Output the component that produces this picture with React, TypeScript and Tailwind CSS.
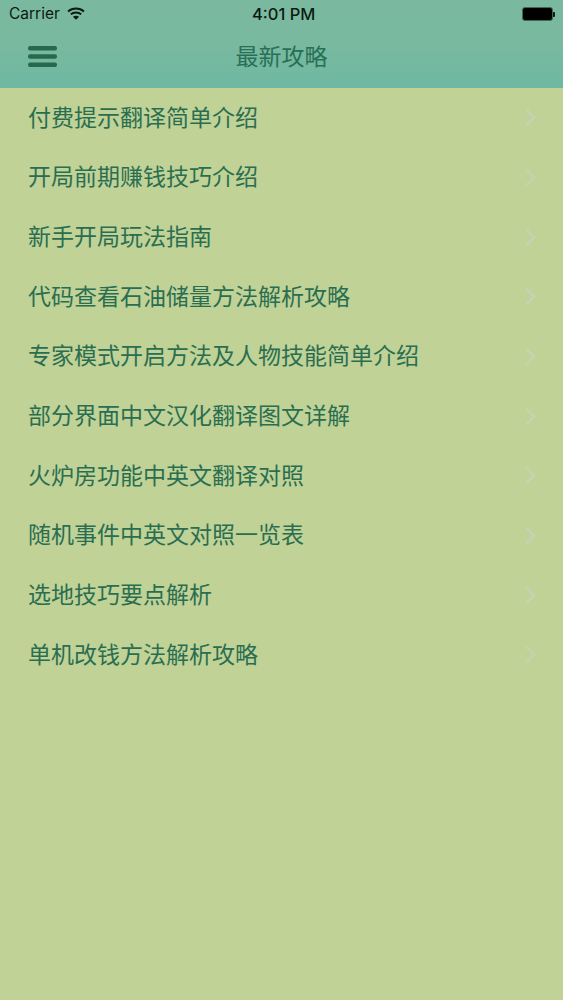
import React from "react";

const items = [
  "付费提示翻译简单介绍",
  "开局前期赚钱技巧介绍",
  "新手开局玩法指南",
  "代码查看石油储量方法解析攻略",
  "专家模式开启方法及人物技能简单介绍",
  "部分界面中文汉化翻译图文详解",
  "火炉房功能中英文翻译对照",
  "随机事件中英文对照一览表",
  "选地技巧要点解析",
  "单机改钱方法解析攻略",
];

export default function App() {
  return (
    <div className="h-[1000px] w-[563px] overflow-hidden bg-[#c0d296] font-['Noto_Sans_CJK_SC','Liberation_Sans',sans-serif]">
      <header className="h-[88px] bg-gradient-to-b from-[#7ab99f] via-[#79b99f] to-[#6fb8a3]">
        <div className="relative flex h-[28px] items-center justify-between pl-[9px] pr-[8px] font-['Inter','Liberation_Sans',sans-serif] text-[#0b1a12]">
          <div className="flex items-center gap-[7px]">
            <span className="text-[15.5px] leading-none">Carrier</span>
            <svg width="18" height="13" viewBox="0 0 17 12" className="mt-[-2px]" fill="none" stroke="#0b1a12" strokeWidth="1.9">
              <path d="M1 4.2C5.2 0.4 11.8 0.4 16 4.2" />
              <path d="M3.6 6.8C6.4 4.4 10.6 4.4 13.4 6.8" />
              <path d="M8.5 12L5.6 9C7.2 7.7 9.8 7.7 11.4 9Z" fill="#0b1a12" stroke="none" />
            </svg>
          </div>
          <span className="absolute left-[252px] top-[6px] text-[16.5px] font-medium leading-none">4:01 PM</span>
          <div className="flex items-center">
            <div className="h-[14px] w-[31px] rounded-[3px] border border-[#3c6a55] bg-black" />
            <div className="h-[5px] w-[2px] rounded-r-[1px] bg-[#0b1a12]" />
          </div>
        </div>
        <div className="relative flex h-[60px] items-center justify-center pb-[5px]">
          <svg width="29" height="21" viewBox="0 0 29 21" className="absolute left-[28px] top-[18px]" fill="#27694f">
            <rect x="0" y="0" width="29" height="4.4" rx="2" />
            <rect x="0" y="8.3" width="29" height="4.4" rx="2" />
            <rect x="0" y="16.6" width="29" height="4.4" rx="2" />
          </svg>
          <h1 className="text-[23px] font-normal leading-none text-[#286f56]">最新攻略</h1>
        </div>
      </header>
      <ul>
        {items.map((t) => (
          <li key={t} className="flex h-[59.67px] items-center justify-between pl-[28px] pr-[27px]">
            <span className="mt-[-3px] text-[23px] leading-none text-[#2a6e52]">{t}</span>
            <svg width="11" height="19" viewBox="0 0 12 20" fill="none" stroke="#c5d3b2" strokeWidth="3">
              <path d="M1.5 1.5L10 10L1.5 18.5" />
            </svg>
          </li>
        ))}
      </ul>
    </div>
  );
}
